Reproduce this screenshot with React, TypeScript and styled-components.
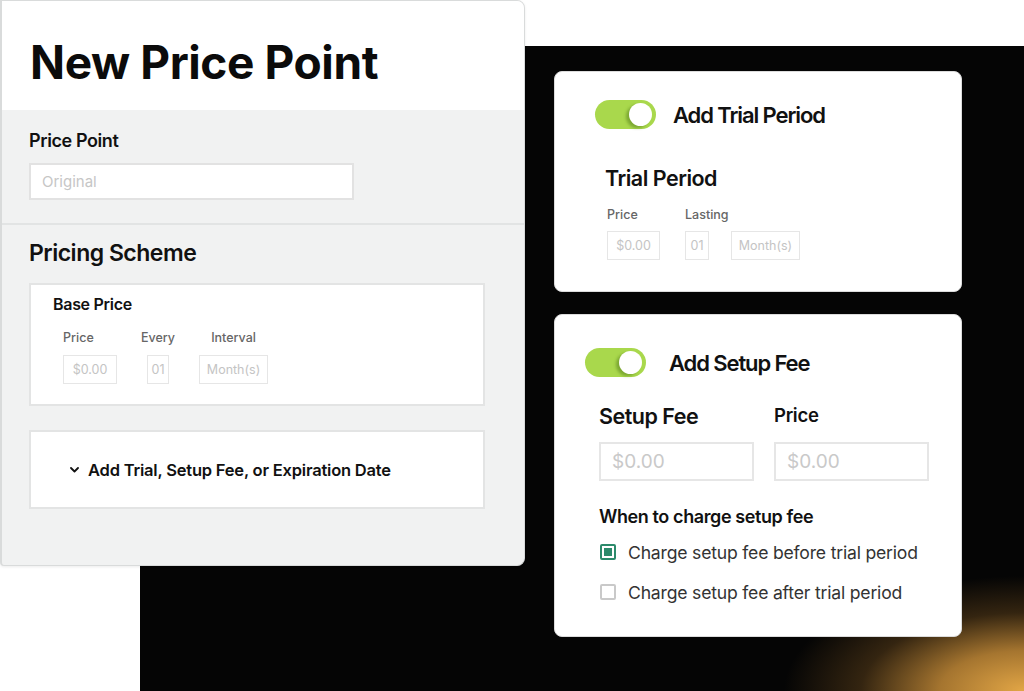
import React from 'react'
import styled, { createGlobalStyle } from 'styled-components'

const GlobalStyle = createGlobalStyle`
  html, body {
    margin: 0;
    padding: 0;
    background: #ffffff;
  }
  body {
    font-family: Inter, "Noto Sans", Arial, sans-serif;
    color: #111;
    overflow: hidden;
  }
  * {
    box-sizing: border-box;
  }
`

interface FieldProps {
  label?: string
  align?: 'start' | 'center'
  children: React.ReactNode
}

const Field: React.FC<FieldProps> = ({ label, align = 'start', children }) => (
  <FieldColumn $align={align}>
    <SmallLabel>{label ?? '\u00a0'}</SmallLabel>
    <InputRow>{children}</InputRow>
  </FieldColumn>
)

const Chevron = () => (
  <svg width="9" height="6" viewBox="0 0 9 6" fill="none">
    <polyline points="1,1 4.5,4.5 8,1" stroke="#111" strokeWidth="1.8" strokeLinecap="round" strokeLinejoin="round" />
  </svg>
)

const App: React.FC = () => {
  return (
    <Stage>
      <GlobalStyle />
      <Backdrop />
      <Layout>
        <LeftCard>
          <Header>
            <PageTitle>New Price Point</PageTitle>
          </Header>
          <PricePointSection>
            <SectionLabel>Price Point</SectionLabel>
            <WideInput>Original</WideInput>
          </PricePointSection>
          <SchemeSection>
            <SchemeTitle>Pricing Scheme</SchemeTitle>
            <BaseBox>
              <BoxTitle>Base Price</BoxTitle>
              <FieldGroup $gap={24}>
                <Field label="Price">
                  <TinyInput $width={54}>$0.00</TinyInput>
                </Field>
                <Field label="Every" align="center">
                  <TinyInput $width={22}>01</TinyInput>
                </Field>
                <Field label="Interval" align="center">
                  <TinyInput $width={69}>Month(s)</TinyInput>
                </Field>
              </FieldGroup>
            </BaseBox>
            <ExpandBox>
              <Chevron />
              <ExpandText>Add Trial, Setup Fee, or Expiration Date</ExpandText>
            </ExpandBox>
          </SchemeSection>
        </LeftCard>

        <RightColumn>
          <TrialCard>
            <ToggleRow $gap={17}>
              <Toggle />
              <ToggleLabel>Add Trial Period</ToggleLabel>
            </ToggleRow>
            <TrialBody>
              <CardHeading>Trial Period</CardHeading>
              <FieldGroup $gap={25} $indent={2}>
                <Field label="Price">
                  <TinyInput $width={53}>$0.00</TinyInput>
                </Field>
                <Field label="Lasting">
                  <TinyInput $width={24}>01</TinyInput>
                  <TinyInput $width={69}>Month(s)</TinyInput>
                </Field>
              </FieldGroup>
            </TrialBody>
          </TrialCard>

          <SetupCard>
            <ToggleRow $gap={23}>
              <Toggle />
              <ToggleLabel>Add Setup Fee</ToggleLabel>
            </ToggleRow>
            <SetupBody>
              <FeeGrid>
                <CardHeading>Setup Fee</CardHeading>
                <PriceHeading>Price</PriceHeading>
                <BigInput>$0.00</BigInput>
                <BigInput>$0.00</BigInput>
              </FeeGrid>
              <ChargeHeading>When to charge setup fee</ChargeHeading>
              <OptionList>
                <Option>
                  <CheckBox $checked />
                  <OptionText>Charge setup fee before trial period</OptionText>
                </Option>
                <Option>
                  <CheckBox />
                  <OptionText>Charge setup fee after trial period</OptionText>
                </Option>
              </OptionList>
            </SetupBody>
          </SetupCard>
        </RightColumn>
      </Layout>
    </Stage>
  )
}

export default App

const Stage = styled.div`
  position: relative;
  width: 1024px;
  height: 691px;
  overflow: hidden;
  background: #ffffff;
`

const Backdrop = styled.div`
  position: absolute;
  left: 140px;
  top: 46px;
  right: 0;
  bottom: 0;
  background:
    radial-gradient(ellipse 240px 115px at 100% 100%, rgba(226, 166, 70, 1) 0%, rgba(205, 145, 58, 0.8) 35%, rgba(140, 96, 38, 0.35) 68%, rgba(0, 0, 0, 0) 100%),
    #050505;
`

const Layout = styled.div`
  position: relative;
  display: flex;
  align-items: flex-start;
`

const LeftCard = styled.div`
  width: 525px;
  height: 566px;
  background: #f1f2f2;
  border: 1px solid #d9dbdb;
  border-left-width: 2px;
  border-radius: 0 8px 8px 4px;
  overflow: hidden;
  box-shadow: 0 1px 3px rgba(0, 0, 0, 0.08);
`

const Header = styled.div`
  height: 109px;
  background: #ffffff;
  padding: 38px 0 0 28px;
`

const PageTitle = styled.h1`
  margin: 0;
  font-size: 46px;
  line-height: 1;
  font-weight: 700;
  letter-spacing: -0.4px;
  color: #0b0b0b;
`

const PricePointSection = styled.div`
  padding: 22px 0 23px 27px;
  border-bottom: 2px solid #e2e4e4;
`

const SectionLabel = styled.div`
  font-size: 18px;
  line-height: 1;
  font-weight: 600;
  letter-spacing: -0.4px;
  margin-bottom: 13px;
`

const WideInput = styled.div`
  width: 325px;
  height: 37px;
  background: #ffffff;
  border: 2px solid #e2e2e2;
  display: flex;
  align-items: center;
  padding-left: 11px;
  font-size: 15px;
  color: #c6c6c6;
`

const SchemeSection = styled.div`
  padding: 17px 0 0 27px;
`

const SchemeTitle = styled.h2`
  margin: 0 0 18px;
  font-size: 23px;
  line-height: 1;
  font-weight: 600;
  letter-spacing: -0.5px;
`

const BaseBox = styled.div`
  width: 456px;
  height: 123px;
  background: #ffffff;
  border: 2px solid #e3e4e4;
  padding: 11px 0 0 22px;
`

const BoxTitle = styled.div`
  font-size: 16px;
  line-height: 1;
  font-weight: 600;
  letter-spacing: -0.3px;
  margin-bottom: 20px;
`

const FieldGroup = styled.div<{ $gap: number; $indent?: number }>`
  display: flex;
  align-items: flex-start;
  gap: ${p => p.$gap}px;
  margin-left: ${p => p.$indent ?? 10}px;
`

const FieldColumn = styled.div<{ $align: 'start' | 'center' }>`
  display: flex;
  flex-direction: column;
  align-items: ${p => (p.$align === 'center' ? 'center' : 'flex-start')};
  gap: 10px;
`

const SmallLabel = styled.div`
  font-size: 12.5px;
  line-height: 1;
  font-weight: 500;
  color: #666;
`

const InputRow = styled.div`
  display: flex;
  gap: 22px;
`

const TinyInput = styled.div<{ $width: number }>`
  width: ${p => p.$width}px;
  height: 29px;
  border: 1.5px solid #e6e6e6;
  display: flex;
  align-items: center;
  justify-content: center;
  font-size: 12.5px;
  color: #c4c4c4;
  background: #fff;
`

const ExpandBox = styled.div`
  width: 456px;
  height: 79px;
  margin-top: 24px;
  background: #ffffff;
  border: 2px solid #e3e4e4;
  display: flex;
  align-items: center;
  gap: 9px;
  padding-left: 39px;
`

const ExpandText = styled.span`
  font-size: 16.5px;
  font-weight: 600;
  letter-spacing: -0.2px;
  color: #111;
`

const RightColumn = styled.div`
  display: flex;
  flex-direction: column;
  gap: 22px;
  margin-left: 29px;
  padding-top: 71px;
  width: 408px;
`

const Card = styled.div`
  background: #ffffff;
  border: 1px solid #dcdcdc;
  border-radius: 8px;
`

const TrialCard = styled(Card)`
  height: 221px;
  padding: 28px 0 0 40px;
`

const SetupCard = styled(Card)`
  height: 323px;
  padding: 33px 0 0 30px;
`

const ToggleRow = styled.div<{ $gap: number }>`
  display: flex;
  align-items: center;
  gap: ${p => p.$gap}px;
`

const Toggle = styled.div`
  position: relative;
  width: 61px;
  height: 29px;
  border-radius: 15px;
  background: #a9d84c;
  flex-shrink: 0;

  &::after {
    content: '';
    position: absolute;
    right: 4px;
    top: 3px;
    width: 23px;
    height: 23px;
    border-radius: 50%;
    background: #ffffff;
    box-shadow: -3px 2px 3px rgba(70, 110, 20, 0.45);
  }
`

const ToggleLabel = styled.span`
  font-size: 22px;
  line-height: 1;
  font-weight: 600;
  letter-spacing: -1.1px;
  color: #111;
`

const TrialBody = styled.div`
  margin: 39px 0 0 10px;

  & > h3 {
    margin-bottom: 19px;
  }
`

const CardHeading = styled.h3`
  margin: 0;
  font-size: 21.5px;
  line-height: 1;
  font-weight: 600;
  letter-spacing: -0.5px;
  color: #111;
`

const SetupBody = styled.div`
  margin: 29px 0 0 14px;
`

const FeeGrid = styled.div`
  display: grid;
  grid-template-columns: 155px 155px;
  column-gap: 20px;
  row-gap: 14px;
  align-items: start;
`

const PriceHeading = styled.div`
  font-size: 18.5px;
  line-height: 1;
  font-weight: 600;
  letter-spacing: -0.3px;
`

const BigInput = styled.div`
  height: 39px;
  border: 2px solid #e6e6e6;
  display: flex;
  align-items: center;
  padding-left: 11px;
  font-size: 19px;
  color: #c9c9c9;
`

const ChargeHeading = styled.div`
  margin-top: 27px;
  font-size: 18px;
  line-height: 1;
  font-weight: 600;
  letter-spacing: -0.4px;
`

const OptionList = styled.div`
  display: flex;
  flex-direction: column;
  gap: 21px;
  margin-top: 17px;
  padding-left: 1px;
`

const Option = styled.div`
  display: flex;
  align-items: center;
  gap: 12px;
`

const CheckBox = styled.span<{ $checked?: boolean }>`
  width: 16px;
  height: 16px;
  border: 2px solid ${p => (p.$checked ? '#2c8a6b' : '#c9c9c9')};
  border-radius: 2px;
  display: flex;
  align-items: center;
  justify-content: center;
  flex-shrink: 0;

  &::after {
    content: '';
    width: 8px;
    height: 8px;
    background: ${p => (p.$checked ? '#2c8a6b' : 'transparent')};
  }
`

const OptionText = styled.span`
  font-size: 17.6px;
  line-height: 19px;
  font-weight: 400;
  letter-spacing: -0.2px;
  color: #333;
`
